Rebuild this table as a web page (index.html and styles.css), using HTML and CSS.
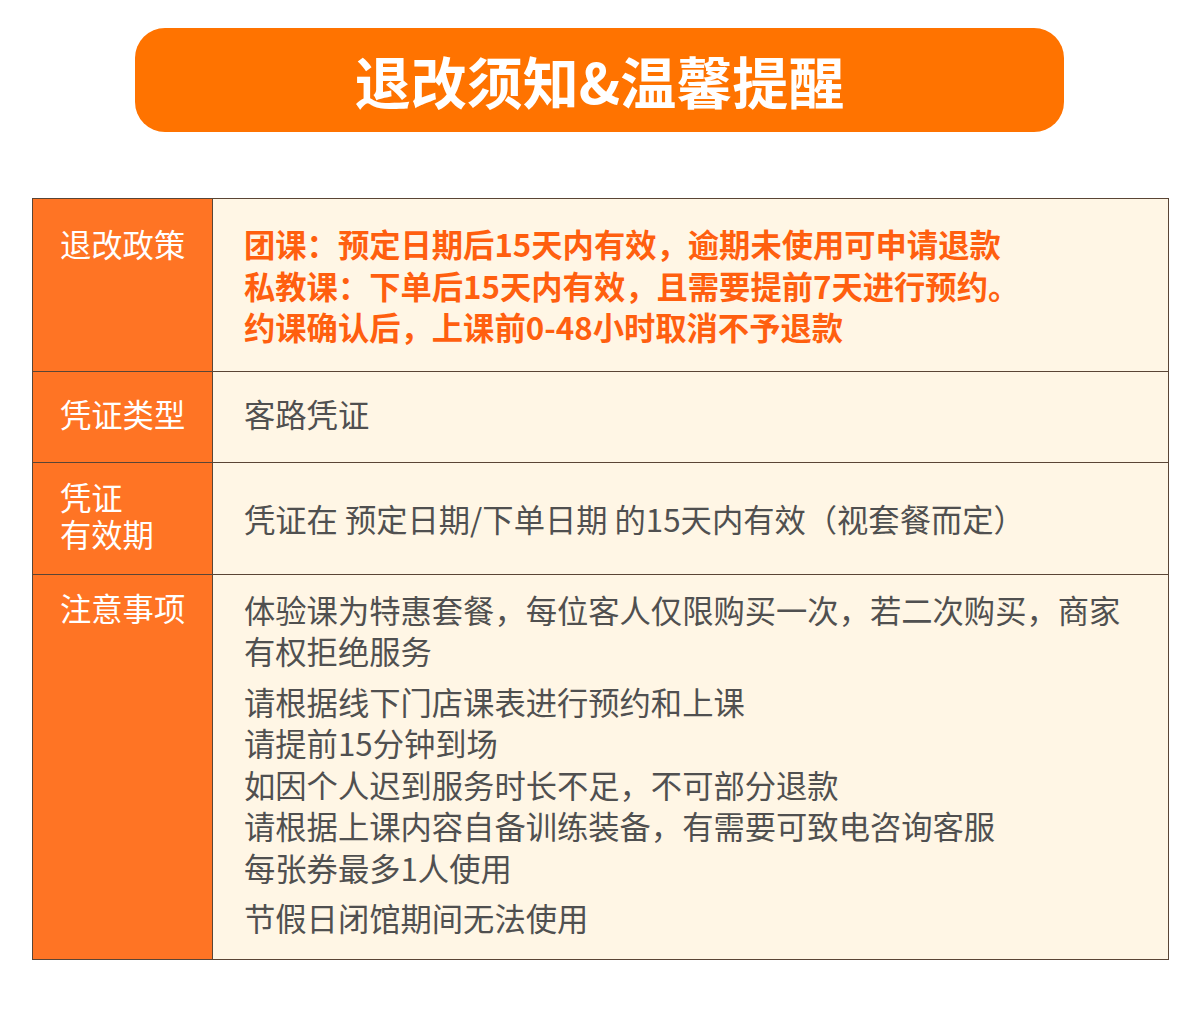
FILE: index.html
```html
<!DOCTYPE html>
<html lang="zh-CN">
<head>
<meta charset="utf-8">
<link rel="stylesheet" href="styles.css">
</head>
<body>
<div class="page">
  <div class="banner"><h1 class="banner-title">退改须知&amp;温馨提醒</h1></div>
  <div class="table">
    <div class="row row-policy">
      <div class="label">退改政策</div>
      <div class="content content-strong">
        <div>团课：预定日期后15天内有效，逾期未使用可申请退款</div>
        <div>私教课：下单后15天内有效，且需要提前7天进行预约。</div>
        <div>约课确认后，上课前0-48小时取消不予退款</div>
      </div>
    </div>
    <div class="row row-type">
      <div class="label">凭证类型</div>
      <div class="content">客路凭证</div>
    </div>
    <div class="row row-valid">
      <div class="label label-stack">凭证<br>有效期</div>
      <div class="content">凭证在 预定日期/下单日期 的15天内有效（视套餐而定）</div>
    </div>
    <div class="row row-notes">
      <div class="label">注意事项</div>
      <div class="content">
        <p class="para">体验课为特惠套餐，每位客人仅限购买一次，若二次购买，商家有权拒绝服务</p>
        <p class="para">请根据线下门店课表进行预约和上课<br>请提前15分钟到场<br>如因个人迟到服务时长不足，不可部分退款<br>请根据上课内容自备训练装备，有需要可致电咨询客服<br>每张券最多1人使用</p>
        <p class="para">节假日闭馆期间无法使用</p>
      </div>
    </div>
  </div>
</div>
</body>
</html>
```
FILE: styles.css
```css
html, body {
  margin: 0;
  padding: 0;
  background: #ffffff;
}
body {
  font-family: "Noto Sans CJK SC", "Noto Sans", sans-serif;
}
.page {
  width: 1200px;
  padding-top: 28px;
  padding-bottom: 51px;
}
.banner {
  width: 929px;
  height: 104px;
  margin: 0 auto 0 135px;
  background: #ff7300;
  border-radius: 30px;
  display: flex;
  align-items: center;
  justify-content: center;
}
.banner-title {
  margin: 0;
  color: #ffffff;
  font-size: 56px;
  font-weight: 700;
  line-height: 1;
  padding-top: 0;
  letter-spacing: 0;
}
.table {
  margin: 66px 0 0 32px;
  width: 1135px;
  border: 1px solid #5a4535;
}
.row {
  display: flex;
  border-top: 1px solid #5a4535;
}
.row:first-child {
  border-top: none;
}
.label {
  width: 152px;
  flex: none;
  background: #ff7424;
  color: #ffffff;
  font-size: 31.3px;
  line-height: 41.5px;
  padding-left: 27px;
  border-right: 1px solid #5a4535;
}
.content {
  flex: 1;
  background: #fff6e5;
  color: #505050;
  font-size: 31.3px;
  line-height: 41.5px;
  padding-left: 31px;
  padding-right: 40px;
}
.content-strong {
  color: #ff5f0f;
  font-weight: 700;
}
.row-policy .label,
.row-policy .content {
  padding-top: 24px;
  padding-bottom: 23px;
}
.row-type .label,
.row-type .content {
  padding-top: 21px;
  padding-bottom: 28px;
}
.row-valid .content {
  padding-top: 35px;
  padding-bottom: 34px;
}
.row-valid .label {
  display: flex;
  align-items: center;
  line-height: 37px;
  padding-bottom: 6px;
}
.row-notes .label {
  padding-top: 12px;
}
.row-notes .content {
  padding-top: 14px;
  padding-bottom: 20px;
}
.para {
  margin: 0;
}
.para + .para {
  margin-top: 9px;
}
```
